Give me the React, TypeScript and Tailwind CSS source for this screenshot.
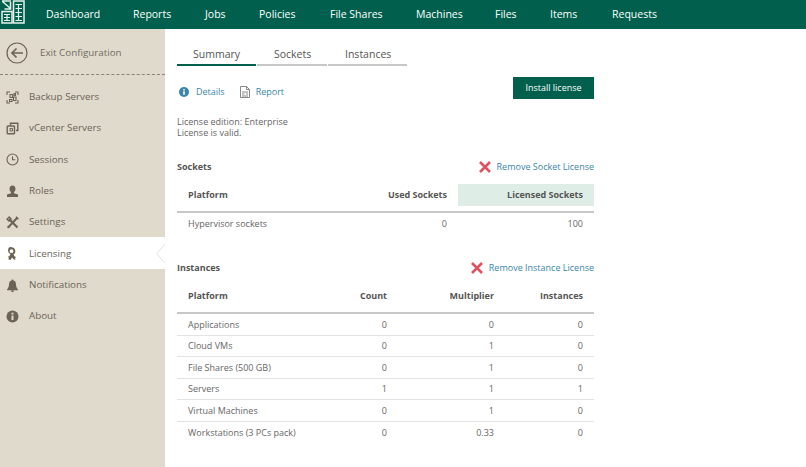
const nav = [
  ["Dashboard", "w-[87px]"],
  ["Reports", "w-[72px]"],
  ["Jobs", "w-[54px]"],
  ["Policies", "w-[71px]"],
  ["File Shares", "w-[86px]"],
  ["Machines", "w-[79px]"],
  ["Files", "w-[55px]"],
  ["Items", "w-[62px]"],
  ["Requests", "w-[60px]"],
];

const C = "#6b6356";
const icons: Record<string, React.ReactNode> = {
  "Backup Servers": (
    <svg width="13" height="13" viewBox="0 0 13 13" fill="none" stroke={C} strokeWidth="1.1">
      <path d="M1 4V1h3M9 1h3v3M1 9v3h3M12 9v3H9" />
      <path d="M4 3.5h2.5v3H4zM7.5 6h2.5v3.5H7.5zM3.5 8.5h2.5v2H3.5zM8 2.5h1.5v2H8z" />
    </svg>
  ),
  "vCenter Servers": (
    <svg width="13" height="13" viewBox="0 0 13 13" fill="none" stroke={C} strokeWidth="1.4">
      <path d="M4.5 3V1.2h7.3v7.3H10" />
      <rect x="1.2" y="4" width="7.3" height="7.8" rx="0.8" />
      <path d="M4 6.5h2.5v2.5H4z" strokeWidth="1" />
    </svg>
  ),
  Sessions: (
    <svg width="13" height="13" viewBox="0 0 13 13" fill="none" stroke={C} strokeWidth="1.1">
      <circle cx="6.5" cy="6.5" r="5.5" />
      <path d="M6.5 3.2v3.5h2.8" />
    </svg>
  ),
  Roles: (
    <svg width="13" height="13" viewBox="0 0 13 13" fill={C}>
      <path d="M6.5 0.5c1.9 0 3 1.3 3 3.2 0 1.4-.6 2.6-1.5 3.2v1.300l4 1.300v2.500H1v-2.500l4-1.300v-1.300C4.100 6.300 3.500 5.100 3.500 3.700c0-1.900 1.100-3.200 3-3.200z" />
    </svg>
  ),
  Settings: (
    <svg width="14" height="13" viewBox="0 0 14 13" fill="none" stroke={C}>
      <path d="M3 3l8.500 8.500" strokeWidth="2.2" />
      <path d="M11.500 1.500L3 10.500" strokeWidth="2" />
      <path d="M1 3.200L3.200 1l2 2-2.200 2.200zM10 .8l2.500 2.500" strokeWidth="1.300" />
      <circle cx="2.500" cy="11" r="1.300" fill={C} stroke="none" />
    </svg>
  ),
  Licensing: (
    <svg width="11" height="14" viewBox="0 0 11 14" fill={C}>
      <path fillRule="evenodd" d="M5.500 0.300a3.900 3.900 0 0 1 2 7.200l1.200 2 1.300 .5-1 1.200.5 1.800-2-.8-1-1.500-1 .5-1 1.800-2-.5.300-1.800-1-1 1.500-.5 1.200-2.200a3.900 3.900 0 0 1 1-7.500zM5.500 2.300a1.900 1.900 0 1 0 0 3.800 1.900 1.900 0 0 0 0-3.800z" />
    </svg>
  ),
  Notifications: (
    <svg width="13" height="13" viewBox="0 0 13 13" fill={C}>
      <path d="M6.500 0.500c.6 0 1 .4 1 1 1.700.5 2.500 1.800 2.500 3.700 0 2.500.8 4 2 5.300v.7H1v-.7c1.200-1.300 2-2.800 2-5.300 0-1.900.8-3.200 2.500-3.700 0-.6.4-1 1-1zM5 11.500h3a1.500 1.500 0 0 1-3 0z" />
    </svg>
  ),
  About: (
    <svg width="13" height="13" viewBox="0 0 13 13">
      <circle cx="6.500" cy="6.500" r="6" fill={C} />
      <rect x="5.500" y="5.500" width="2" height="4.500" fill="#e0dacd" />
      <rect x="5.500" y="2.700" width="2" height="1.800" fill="#e0dacd" />
    </svg>
  ),
};

const side = ["Backup Servers", "vCenter Servers", "Sessions", "Roles", "Settings", "Licensing", "Notifications", "About"];

const Cross = () => (
  <svg width="12" height="12" viewBox="0 0 12 12" stroke="#dd5360" strokeWidth="2.600">
    <path d="M1 1l10 10M11 1L1 11" />
  </svg>
);

const inst = [
  ["Applications", "0", "0", "0"],
  ["Cloud VMs", "0", "1", "0"],
  ["File Shares (500 GB)", "0", "1", "0"],
  ["Servers", "1", "1", "1"],
  ["Virtual Machines", "0", "1", "0"],
  ["Workstations (3 PCs pack)", "0", "0.33", "0"],
];

export default function App() {
  return (
    <div className="w-[806px] h-[467px] flex flex-col overflow-hidden bg-white text-[9px] text-[#666] [font-family:'Open_Sans',sans-serif]">
      <header className="h-[29px] shrink-0 bg-[#00604d] flex items-center text-white text-[10.500px]">
        <div className="w-[46px] h-[29px] shrink-0 pl-[1px] flex items-start">
          <svg width="24" height="24" viewBox="0 0 24 24" fill="none" stroke="#e6f1ed" strokeWidth="1.500">
            <path d="M1 1h9M1.500 1.500l8 7M9.500 2v7H3.500" />
            <rect x="1" y="11.500" width="10" height="11.500" />
            <path d="M3 14.500h6M3 17.500h6M3 20.500h6M6 14v7" strokeWidth="1.200" />
            <rect x="12.500" y="1" width="10.500" height="22" />
            <path d="M14.500 4.500h6.500M14.500 8.500h6.500M14.500 12.500h6.500M14.500 16.500h6.500M14.500 20.500h6.500M17.500 4v17" strokeWidth="1.200" />
          </svg>
        </div>
        {nav.map(([t, w]) => (
          <div key={t} className={`${w} shrink-0`}>{t}</div>
        ))}
      </header>
      <div className="flex flex-1 min-h-0">
        <aside className="w-[165px] shrink-0 bg-[#e0dacd] text-[9.800px] text-[#6b6356]">
          <div className="h-[46px] box-border pt-[3px] flex items-center pl-[6px] gap-[12px] border-b border-dashed border-[#8a8475]">
            <svg width="22" height="22" viewBox="0 0 22 22" fill="none" stroke="#6b6356" strokeWidth="1.200">
              <circle cx="11" cy="11" r="10" />
              <path d="M17 11H6M10.500 6.500L6 11l4.500 4.500" strokeWidth="1.700" />
            </svg>
            <span className="text-[#6f6a5e]">Exit Configuration</span>
          </div>
          <div className="pt-[6px]">
            {side.map((s) => (
              <div key={s} className={`h-[31.300px] box-border pt-[1.500px] flex items-center relative ${s === "Licensing" ? "bg-white" : ""}`}>
                <span className="w-[29px] pl-[6px] shrink-0 flex">{icons[s]}</span>
                <span>{s}</span>
                {s === "Licensing" && (
                  <svg className="absolute right-0 top-[7px]" width="9" height="19" viewBox="0 0 9 19">
                    <path d="M9 0L0.500 9.500 9 19" fill="none" stroke="#e6e2d8" />
                  </svg>
                )}
              </div>
            ))}
          </div>
        </aside>
        <main className="w-[418px] ml-[12px] shrink-0">
          <div className="flex mt-[17px] gap-[1px] text-[10.500px] text-[#555]">
            <div className="w-[79px] h-[20px] pl-[16px] pt-[1px] border-b-2 border-[#00604d]">Summary</div>
            <div className="w-[70px] h-[20px] pl-[17px] pt-[1px] border-b-2 border-[#c8c8c8]">Sockets</div>
            <div className="w-[79px] h-[20px] pl-[17px] pt-[1px] border-b-2 border-[#c8c8c8]">Instances</div>
          </div>
          <div className="flex justify-between items-start mt-[11px] h-[23px]">
            <div className="flex items-center h-[23px] mt-[3px] pl-[2px] text-[#3a86a8]">
              <svg width="10" height="10" viewBox="0 0 10 10">
                <circle cx="5" cy="5" r="5" fill="#3a86a8" />
                <rect x="4.200" y="4.200" width="1.600" height="3.500" fill="#fff" />
                <rect x="4.200" y="2" width="1.600" height="1.400" fill="#fff" />
              </svg>
              <span className="ml-[7px]">Details</span>
              <svg className="ml-[15px]" width="10" height="12" viewBox="0 0 10 12" fill="none" stroke="#6b6b6b" strokeWidth="0.800">
                <path d="M.5.500h6l3 3v8h-9zM6.500.500v3h3M2 6h6M2 8h2.500M6 8h2M2 10h6" />
              </svg>
              <span className="ml-[6px]">Report</span>
            </div>
            <button className="w-[81px] h-[22px] bg-[#00604d] text-white text-[9px] mr-[1px]">Install license</button>
          </div>
          <div className="mt-[16px] leading-[11px]">
            <div>License edition: Enterprise</div>
            <div>License is valid.</div>
          </div>

          <div className="flex justify-between items-center mt-[22px] h-[14px] pr-[1px]">
            <span className="font-bold text-[#555]">Sockets</span>
            <span className="flex items-center text-[9px] text-[#3a86a8]">
              <Cross />
              <span className="ml-[6px]">Remove Socket License</span>
            </span>
          </div>
          <div className="w-[417px] mt-[10px] flex h-[22px] items-center font-bold text-[#555]">
            <div className="w-[134px] pl-[11px]">Platform</div>
            <div className="w-[136px] text-right">Used Sockets</div>
            <div className="w-[136px] ml-[11px] h-[22px] flex items-center justify-end pr-[11px] bg-[#deeee7]">Licensed Sockets</div>
          </div>
          <div className="w-[417px] mt-[5px] border-t-2 border-[#c8c8c8] h-[24px] flex items-center">
            <div className="w-[134px] pl-[11px]">Hypervisor sockets</div>
            <div className="w-[136px] text-right">0</div>
            <div className="w-[147px] text-right pr-[11px]">100</div>
          </div>

          <div className="flex justify-between items-center mt-[26px] h-[14px] pr-[1px]">
            <span className="font-bold text-[#555]">Instances</span>
            <span className="flex items-center text-[9px] text-[#3a86a8]">
              <Cross />
              <span className="ml-[6px]">Remove Instance License</span>
            </span>
          </div>
          <div className="w-[417px] mt-[10px] flex h-[22px] items-center font-bold text-[#555]">
            <div className="w-[148px] pl-[11px]">Platform</div>
            <div className="w-[62px] text-right">Count</div>
            <div className="w-[107px] text-right">Multiplier</div>
            <div className="w-[89px] text-right">Instances</div>
          </div>
          <div className="w-[417px] mt-[5px] border-t-2 border-[#c8c8c8]">
            {inst.map((r, i) => (
              <div key={r[0]} className={`h-[21.500px] flex items-center ${i < 5 ? "border-b border-[#e3e3e3]" : ""}`}>
                <div className="w-[148px] pl-[11px] whitespace-nowrap">{r[0]}</div>
                <div className="w-[62px] text-right">{r[1]}</div>
                <div className="w-[107px] text-right">{r[2]}</div>
                <div className="w-[89px] text-right">{r[3]}</div>
              </div>
            ))}
          </div>
        </main>
      </div>
    </div>
  );
}
